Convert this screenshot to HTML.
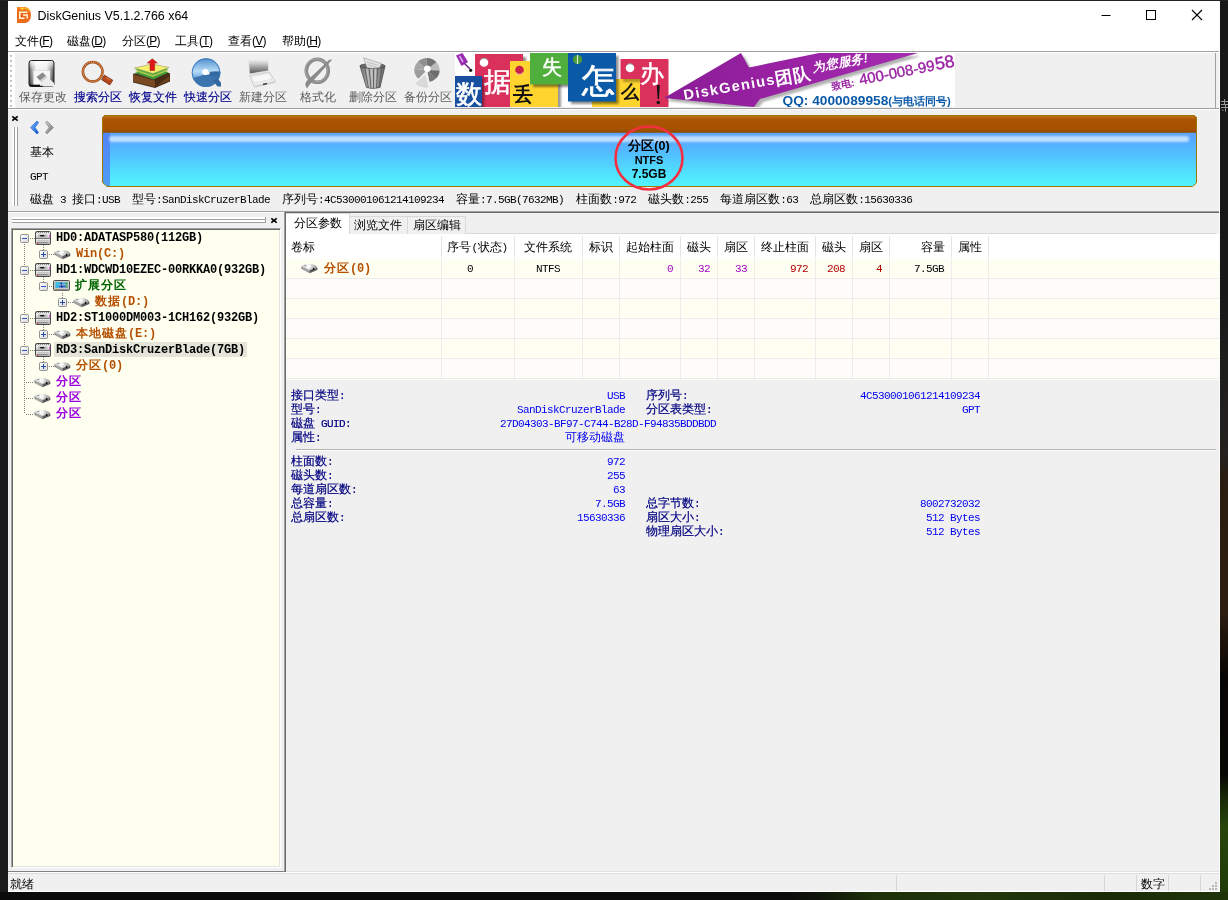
<!DOCTYPE html>
<html><head><meta charset="utf-8"><title>DiskGenius</title>
<style>
*{box-sizing:border-box;margin:0;padding:0}
html,body{width:1228px;height:900px;overflow:hidden;background:#191919}
body{position:relative;font-family:"Liberation Sans",sans-serif;font-size:12px;color:#000}
#root{position:absolute;left:0;top:0;width:1228px;height:900px;will-change:transform}
.a{position:absolute}
svg{overflow:visible}
.t{position:absolute;white-space:nowrap;line-height:14px;height:14px}
.m{font-family:"Liberation Mono",monospace;font-size:11px;letter-spacing:-0.6px}
.tr{font-weight:bold;letter-spacing:1px}
.mb{font-family:"Liberation Mono",monospace;font-size:12px;letter-spacing:-0.2px;font-weight:bold}
.mi u{text-decoration:underline;text-underline-offset:1px}
.tl{width:55px;text-align:center;color:#5c5c5c}
.tl.b{color:#00008b;-webkit-text-stroke:.15px #00008b}
.br{color:#b45000}.gr{color:#006400}.pu{color:#9a00e0}
.lab{color:#000080;-webkit-text-stroke:.2px #000080}
.val{color:#0000f0;text-align:right}
.r{text-align:right}.c{text-align:center}
</style></head><body>
<div id="root">
<div class="a" style="left:0px;top:0px;width:8px;height:900px;background:#1b1b1b;"></div>
<div class="a" style="left:1220px;top:0px;width:8px;height:900px;background:linear-gradient(#171717 0,#181818 33%,#1e1e1d 40%,#24211e 51%,#2a1c10 53%,#2c1d10 68%,#1a1008 72%,#080604 75%,#070704 86%,#1a2c08 89%,#27450b 92%,#1f3a08 100%);"></div>
<svg class="a" style="left:1221px;top:99px" width="7" height="13"><path d="M0 2.500h7M3.500 0v5M0 5.500h7M0 8.500h7M4.500 6v6.500M1 10.500l1.500 1.500" stroke="#9a9a9a" stroke-width="1" fill="none"/></svg>
<div class="a" style="left:0px;top:892px;width:1228px;height:8px;background:linear-gradient(90deg,#0b0b0b 0,#0c0c0c 64%,#10160a 67%,#1d3009 71%,#22370c 80%,#1a2c08 90%,#1f3409 100%);"></div>
<div class="a" style="left:0px;top:0px;width:1228px;height:1px;background:#222;"></div>
<div class="a" style="left:8px;top:1px;width:1212px;height:891px;background:#f0f0f0;"></div>
<div class="a" style="left:8px;top:1px;width:1212px;height:30px;background:#fff;"></div>
<svg class="a" style="left:16px;top:7px" width="16" height="16" viewBox="0 0 16 16"><defs><linearGradient id="tg" x1="0" y1="0" x2="0" y2="1"><stop offset="0" stop-color="#f5871f"/><stop offset=".3" stop-color="#f06c1c"/><stop offset="1" stop-color="#ee6a1c"/></linearGradient></defs><path d="M1 0H9.500Q15 1.500 15 8Q15 14.500 9.500 16H1z" fill="url(#tg)"/><path d="M4 1.200H9.500Q12.500 2 13.800 4.500" stroke="#fbb724" stroke-width="1.400" fill="none" opacity=".85"/><circle cx="6.300" cy="1.700" r="1" fill="#ffe838"/><path d="M11.400 5.300H3.800V11.300H8.600M11.200 11.600V8.100H7" fill="none" stroke="#fff6d8" stroke-width="1.500"/><path d="M5 7.500L7 10H5z" fill="#e8401c"/></svg>
<div class="t " style="left:37.5px;top:9px;font-size:12.45px;line-height:15px;height:15px">DiskGenius V5.1.2.766 x64</div>
<svg class="a" style="left:1096px;top:5px" width="116" height="22" viewBox="0 0 116 22"><path d="M5.5 10.500h9" stroke="#000" stroke-width="1" fill="none"/><rect x="50.500" y="5.500" width="9" height="9" fill="none" stroke="#000" stroke-width="1"/><path d="M96 5l10 10M106 5l-10 10" stroke="#000" stroke-width="1.100" fill="none"/></svg>
<div class="a" style="left:8px;top:31px;width:1212px;height:20px;background:#fff;"></div>
<div class="t mi" style="left:15px;top:34px;">文件<span style="letter-spacing:-.7px">(<u>F</u>)</span></div>
<div class="t mi" style="left:67px;top:34px;">磁盘<span style="letter-spacing:-.7px">(<u>D</u>)</span></div>
<div class="t mi" style="left:122px;top:34px;">分区<span style="letter-spacing:-.7px">(<u>P</u>)</span></div>
<div class="t mi" style="left:175px;top:34px;">工具<span style="letter-spacing:-.7px">(<u>T</u>)</span></div>
<div class="t mi" style="left:228px;top:34px;">查看<span style="letter-spacing:-.7px">(<u>V</u>)</span></div>
<div class="t mi" style="left:282px;top:34px;">帮助<span style="letter-spacing:-.7px">(<u>H</u>)</span></div>
<div class="a" style="left:8px;top:51px;width:1212px;height:1px;background:#a0a0a0;"></div>
<div class="a" style="left:8px;top:52px;width:1212px;height:1px;background:#fff;"></div>
<div class="a" style="left:8px;top:108px;width:1212px;height:1px;background:#a0a0a0;"></div>
<div class="a" style="left:8px;top:109px;width:1212px;height:1px;background:#fff;"></div>
<div class="a" style="left:1215px;top:53px;width:1px;height:55px;background:#a0a0a0;"></div>
<div class="a" style="left:8px;top:53px;width:7px;height:55px;background:#fff;"></div>
<div class="a" style="left:10px;top:55px;width:2px;height:52px;background:repeating-linear-gradient(#b4b4b4 0,#d4d4d4 2px,transparent 2px,transparent 5px);"></div>
<svg class="a" style="left:0;top:0" width="470" height="110" viewBox="0 0 470 110">
<defs>
<linearGradient id="i1a" x1="0" y1="0" x2="1" y2="0"><stop offset="0" stop-color="#2a2a2a"/><stop offset=".12" stop-color="#9a9a9a"/><stop offset=".3" stop-color="#f2f2f2"/><stop offset=".7" stop-color="#e6e6e6"/><stop offset=".88" stop-color="#8a8a8a"/><stop offset="1" stop-color="#2a2a2a"/></linearGradient>
<linearGradient id="i1b" x1="0" y1="0" x2="0" y2="1"><stop offset="0" stop-color="#fff" stop-opacity=".9"/><stop offset=".35" stop-color="#fff" stop-opacity=".2"/><stop offset="1" stop-color="#000" stop-opacity=".35"/></linearGradient>
<linearGradient id="i4a" x1="0" y1="0" x2="0" y2="1"><stop offset="0" stop-color="#4f8fd0"/><stop offset=".45" stop-color="#b8dcf6"/><stop offset=".7" stop-color="#6aa8dc"/></linearGradient>
<linearGradient id="i5a" x1="0" y1="0" x2="0" y2="1"><stop offset="0" stop-color="#fdfdfd"/><stop offset=".35" stop-color="#c8c8c8"/><stop offset="1" stop-color="#505050"/></linearGradient>
<linearGradient id="i7a" x1="0" y1="0" x2="1" y2="0"><stop offset="0" stop-color="#6e6e6e"/><stop offset=".3" stop-color="#a8a8a8"/><stop offset=".55" stop-color="#b4b4b4"/><stop offset="1" stop-color="#5e5e5e"/></linearGradient>
<clipPath id="c4"><circle cx="206" cy="72.600" r="14.300"/></clipPath>
</defs>
<!-- 1 save -->
<path d="M31.500 60.500H51.500Q54 60.500 54 63V84Q54 86.500 51.500 86.500H31.500Q29 86.500 29 84V63Q29 60.500 31.500 60.500z" fill="url(#i1a)"/>
<path d="M31.500 60.500H51.500Q54 60.500 54 63V84Q54 86.500 51.500 86.500H31.500Q29 86.500 29 84V63Q29 60.500 31.500 60.500z" fill="url(#i1b)" stroke="#1e1e1e" stroke-width="1"/>
<rect x="33.500" y="70.500" width="16.500" height="14.500" fill="#f6f6f6" stroke="#d0d0d0" stroke-width=".5"/>
<path d="M29.500 85.500H40" stroke="#111" stroke-width="1.600"/>
<path d="M36.500 77L42.500 72.500L54 83V86.500H43z" fill="#ededed"/>
<path d="M36.500 77L42.500 72.500L46 75.700L40 80.500z" fill="#8a8a8a"/>
<path d="M40 80.500L46 75.700L47.500 77L41.300 82z" fill="#c9c9c9"/>
<!-- 2 search -->
<circle cx="92.700" cy="71.700" r="9.800" fill="none" stroke="#8a4418" stroke-width="2.500"/>
<circle cx="92.700" cy="71.700" r="9.800" fill="none" stroke="#e8924c" stroke-width="1.500" stroke-dasharray="1.300 .9"/>
<circle cx="92.700" cy="71.700" r="9.800" fill="none" stroke="#d87838" stroke-width="1" opacity=".7"/>
<path d="M104.300 75L112.800 80.200L109.800 85L101.600 79.700z" fill="#b4461c" stroke="#6a2a10" stroke-width=".7"/>
<path d="M106.300 77.500L110 79.800" stroke="#e07a48" stroke-width="1.400" opacity=".7"/>
<!-- 3 recover -->
<path d="M133 74L155 80V87.500L133 82z" fill="#7b4a22"/>
<path d="M155 80L170 73.500V81L155 87.500z" fill="#4a2c14"/>
<path d="M155 87L169.500 76V81L155 87.500z" fill="#6a4220"/>
<path d="M133 74L155 80L170 73.500" fill="none" stroke="#3a2410" stroke-width=".8"/>
<path d="M133 82L155 87.500L170 81" fill="none" stroke="#2a1808" stroke-width=".8"/>
<path d="M133 74L151 69L170 73.500L155 80.500z" fill="#4a2c14"/><path d="M134.500 73L152 68L169 72.300L153.500 79.600z" fill="#3c9a3c"/>
<path d="M135 71L152 66.500L168.500 70.500L153 77z" fill="#b8c848"/>
<path d="M135 69.500L152 65.500L168.500 69L153 75.500z" fill="#58b048"/>
<path d="M134.500 68L152 64L169 67.500L153 73.500z" fill="#f4f070" stroke="#8a8a40" stroke-width=".5"/>
<path d="M150 70.500V63H147.200L152.300 58.800L157.400 63H154.600V70.500z" fill="#e01818" stroke="#a01010" stroke-width=".5"/>
<!-- 4 quick partition -->
<circle cx="206" cy="72.600" r="14.300" fill="url(#i4a)"/>
<g clip-path="url(#c4)"><path d="M190 78Q200 77 206 73.500T222 72V90H190z" fill="#3c73ad"/><path d="M206 73L222 71.500V76L208 76z" fill="#3468a0"/></g>
<circle cx="206" cy="72.600" r="13.800" fill="none" stroke="#3a78b8" stroke-width="1"/>
<path d="M213 81L217 78L221 82.500V86.500H217.500z" fill="#3468a0"/>
<circle cx="205.300" cy="72" r="3.100" fill="#fff"/>
<path d="M205.300 72H209.500V74.500H206z" fill="#fff"/>
<!-- 5 new partition (laptop) -->
<path d="M248.500 60.500L268.500 58.300L268.500 70.800L249.500 74z" fill="url(#i5a)" stroke="#e8e8e8" stroke-width=".8"/>
<path d="M249.500 75.500L269.500 72L275.500 81.500L254 86.500z" fill="#ececec" stroke="#c0c0c0" stroke-width=".7"/>
<path d="M251.500 76.800L268.800 73.600L272 79L254.300 82.800z" fill="#f8f8f8" stroke="#d8d8d8" stroke-width=".5"/>
<path d="M254 86.500L275.500 81.500V82.800L254.500 87.800z" fill="#d0d0d0"/>
<path d="M263 83.800L267 83V84.200L263 85z" fill="#1a1a1a"/>
<!-- 6 format -->
<ellipse cx="317.300" cy="70.800" rx="11" ry="11.500" fill="none" stroke="#8c8c8c" stroke-width="3.600"/>
<ellipse cx="316.300" cy="70.300" rx="11" ry="11.500" fill="none" stroke="#a6a6a6" stroke-width="1.200" opacity=".8"/>
<path d="M332.300 59.600L329.300 59.800L306.200 81.500L305.200 84.500L306.800 88.600L310 84.200z" fill="#8a8a8a"/>
<!-- 7 delete -->
<path d="M360 66L385 66L380 87.500Q373 89.500 366.500 87.500z" fill="url(#i7a)" stroke="#4e4e4e" stroke-width=".8"/>
<path d="M364.500 67L368.500 88M369 67L371 88.500M373.500 67L373.500 88.500M378 67L376.500 88M382 67L379 87.500" stroke="#5a5a5a" stroke-width=".9" fill="none"/>
<path d="M366.700 67L369.700 88M371.300 67L372.300 88.500M375.700 67L375 88.500" stroke="#d0d0d0" stroke-width=".9" fill="none" opacity=".8"/>
<ellipse cx="372.500" cy="66" rx="12.600" ry="2.400" fill="#6c6c6c" stroke="#444" stroke-width=".7"/>
<path d="M363.500 57.800L381.500 63.500L379.500 67.500Q372 69 367 67.500z" fill="#e4e4e4" stroke="#9a9a9a" stroke-width=".6"/>
<path d="M367 62L378.500 65.500M367.500 64.500L376 67" stroke="#b0b0b0" stroke-width=".7"/>
<!-- 8 backup -->
<g>
<path d="M426.900 69.900L426.900 58A12.500 11.900 0 0 1 436.500 62.300z" fill="#747474"/>
<path d="M426.900 69.900L436.500 62.300A12.500 11.900 0 0 1 439.600 70.500z" fill="#bdbdbd"/>
<path d="M426.900 69.900L439.600 70.500A12.500 11.900 0 0 1 436 78.500z" fill="#6e6e6e"/>
<path d="M426.900 69.900L436 78.500A12.500 11.900 0 0 1 429.500 81.800z" fill="#787878"/>
<path d="M426.900 69.900L426.900 58A12.500 11.900 0 0 0 418 61.500z" fill="#8e8e8e"/>
<path d="M426.900 69.900L418 61.500A12.500 11.900 0 0 0 414.300 69z" fill="#a6a6a6"/>
<path d="M426.900 69.900L414.300 69A12.500 11.900 0 0 0 418.500 78.800z" fill="#9c9c9c"/>
<path d="M425.500 75L416 83.500Q421 87.500 427.500 87.200z" fill="#dadada" stroke="#c4c4c4" stroke-width=".5"/>
<path d="M427.500 72L429 81.500L425 75.500z" fill="#f0f0f0"/>
<circle cx="427.300" cy="68.800" r="3.300" fill="#fff"/>
</g>
</svg>

<div class="t tl" style="left:15px;top:90px;">保存更改</div>
<div class="t tl b" style="left:70px;top:90px;">搜索分区</div>
<div class="t tl b" style="left:125px;top:90px;">恢复文件</div>
<div class="t tl b" style="left:180px;top:90px;">快速分区</div>
<div class="t tl" style="left:235px;top:90px;">新建分区</div>
<div class="t tl" style="left:290px;top:90px;">格式化</div>
<div class="t tl" style="left:345px;top:90px;">删除分区</div>
<div class="t tl" style="left:400px;top:90px;">备份分区</div>
<div class="a" id="banner" style="left:455px;top:53px;width:500px;height:54px;background:#fff;overflow:hidden"><svg width="500" height="54" viewBox="455 53 500 54" style="position:absolute;left:0;top:0;font-family:'Liberation Serif',serif">
<defs>
<filter id="sh" x="-20%" y="-20%" width="150%" height="150%"><feGaussianBlur stdDeviation="1.1"/></filter>
<linearGradient id="pa" x1="0" y1="0" x2="1" y2="0"><stop offset="0" stop-color="#8a1d96"/><stop offset=".5" stop-color="#9a22a4"/><stop offset="1" stop-color="#a42cae"/></linearGradient>
</defs>
<!-- red 据 -->
<rect x="478" y="57" width="48" height="52" fill="#000" opacity=".45" filter="url(#sh)"/>
<rect x="475" y="54" width="48" height="54" fill="#d9305c"/>
<circle cx="484" cy="62.500" r="4.300" fill="#fff"/><path d="M480.500 60A4.300 4.300 0 0 1 487.500 60" stroke="#999" stroke-width="1" fill="none"/>
<text x="484" y="91" font-size="27" fill="#fff" stroke="#fff" stroke-width=".6">据</text>
<!-- blue 数 -->
<rect x="457" y="78" width="27" height="30" fill="#000" opacity=".4" filter="url(#sh)"/>
<rect x="455" y="76" width="27" height="31" fill="#184f9e"/>
<text x="455.500" y="103" font-size="26" fill="#fff" stroke="#fff" stroke-width=".6">数</text>
<!-- pin -->
<path d="M456 55.500L462.500 53L468 62L461.500 66z" fill="#9a2ab0"/><path d="M459.500 56l3.500 6" stroke="#dcaaf0" stroke-width="1.600"/><path d="M464.500 63.500L470 69" stroke="#6a1a80" stroke-width="1.400"/><circle cx="470.700" cy="70.300" r="1.600" fill="#111"/>
<!-- yellow 丢 -->
<rect x="513" y="64" width="48" height="45" fill="#000" opacity=".4" filter="url(#sh)"/>
<rect x="510" y="61" width="48" height="47" fill="#ffd42e"/>
<circle cx="519.500" cy="70" r="4.300" fill="#c8204c"/><path d="M516 72.500A4.300 4.300 0 0 0 523 72.500" stroke="#f6b0c0" stroke-width="1" fill="none"/>
<text x="513" y="101" font-size="20" fill="#111" font-weight="bold">丢</text>
<!-- green 失 -->
<rect x="533" y="56" width="38" height="31" fill="#000" opacity=".45" filter="url(#sh)"/>
<rect x="530" y="53" width="38.500" height="31.500" fill="#4fae3c"/>
<text x="541.500" y="73.500" font-size="19.500" fill="#fff" stroke="#fff" stroke-width=".5">失</text>
<!-- yellow 么 -->
<rect x="595" y="82" width="47" height="27" fill="#000" opacity=".4" filter="url(#sh)"/>
<rect x="592" y="79" width="48" height="29" fill="#ffd42e"/>
<text x="620.500" y="97.500" font-size="18" fill="#111" font-weight="bold">么</text>
<!-- blue 怎 -->
<rect x="571" y="56" width="47.500" height="48" fill="#000" opacity=".45" filter="url(#sh)"/>
<rect x="568" y="53" width="48" height="48.500" fill="#0b5aa8"/>
<circle cx="577.500" cy="59.500" r="4.600" fill="#4a9a38"/><path d="M577.500 55V64" stroke="#d8f0d0" stroke-width="1.200"/>
<text x="581.500" y="91.500" font-size="33" fill="#fff" stroke="#fff" stroke-width=".8">怎</text>
<!-- red 办 -->
<path d="M640 59H668V107H640z" fill="#d9305c"/>
<rect x="623" y="62" width="20" height="20" fill="#000" opacity=".3" filter="url(#sh)"/>
<rect x="620.500" y="59" width="48" height="20" fill="#d9305c"/>
<rect x="640" y="79" width="28.500" height="28" fill="#d9305c"/>
<circle cx="630" cy="68" r="4.300" fill="#fff"/><path d="M626.500 65.500A4.300 4.300 0 0 1 633.500 65.500" stroke="#999" stroke-width="1" fill="none"/>
<text x="640" y="81.500" font-size="24" fill="#fff" stroke="#fff" stroke-width=".5">办</text>
<path d="M656.800 85L659.800 85L658.900 99L657.700 99z" fill="#111"/><circle cx="658.300" cy="102.500" r="1.700" fill="#111"/>
<!-- arrow -->
<path d="M667 101L744 56L752 70L822 56H921L763 102L757 110z" fill="#000" opacity=".3" filter="url(#sh)"/>
<path d="M664 98L741 53L749 67.500L819 53H918L760 99L754 107z" fill="url(#pa)"/>
<g transform="translate(684.500 100) rotate(-10)" fill="#fff" font-family="'Liberation Sans',sans-serif" font-weight="bold">
<text x="0" y="0" font-size="14.500" letter-spacing="1.350">DiskGenius</text>
<text x="93" y="1" font-size="17.500">团队</text>
<text x="131.500" y="-5.500" font-size="12.500" font-style="italic">为您服务!</text>
</g>
<g transform="translate(832.200 90.300) rotate(-11)" fill="#9a22a4" font-family="'Liberation Sans',sans-serif" font-weight="bold">
<text x="0" y="0" font-size="10">致电:</text>
<text x="28.500" y="0" font-size="15" font-weight="normal" stroke="#9a22a4" stroke-width=".4">400-008-99</text>
<text x="106" y="0" font-size="17.500" font-weight="normal" stroke="#9a22a4" stroke-width=".4">58</text>
</g>
<text x="782.500" y="105" font-size="13.700" fill="#0b5aa8" font-family="'Liberation Sans',sans-serif" font-weight="bold">QQ: 4000089958<tspan font-size="11.200" dy="-.5">(与电话同号)</tspan></text>
</svg>
</div>
<div class="a" id="disk" style="left:102px;top:115px;width:1095px;height:72px">
<svg width="1095" height="72" viewBox="0 0 1095 72" style="position:absolute;left:0;top:0">
<defs>
<linearGradient id="gb" x1="0" y1="0" x2="0" y2="1"><stop offset="0" stop-color="#5a7cf5"/><stop offset=".06" stop-color="#6a98fb"/><stop offset=".3" stop-color="#57a4ff"/><stop offset=".55" stop-color="#52c0ff"/><stop offset=".8" stop-color="#50e0fe"/><stop offset="1" stop-color="#52f4fd"/></linearGradient>
<linearGradient id="gbr" x1="0" y1="0" x2="0" y2="1"><stop offset="0" stop-color="#c27722"/><stop offset=".25" stop-color="#a95503"/><stop offset=".8" stop-color="#a65200"/><stop offset="1" stop-color="#8f4a00"/></linearGradient>
<filter id="bl" x="-5%" y="-100%" width="110%" height="300%"><feGaussianBlur stdDeviation="1.2"/></filter>
</defs>
<path d="M2.5 .5H1092.500L1094.500 2.500V68L1090.500 71.500H5L.5 67.500V2.500z" fill="url(#gb)"/>
<path d="M2.5 .5H1092.500L1094.500 2.500V17.500H.5V2.500z" fill="url(#gbr)"/>
<path d="M1 17.500H8V71H5L1 67.500z" fill="#4f78f0" opacity=".7"/>
<rect x="7" y="21" width="1080" height="6" rx="3" fill="#fff" opacity=".62" filter="url(#bl)"/>
<path d="M2.5 .5H1092.500L1094.500 2.500V68L1090.500 71.500H5L.5 67.500V2.500z" fill="none" stroke="#a07800" stroke-width="1"/>
<path d="M.5 17.500H1094.500" stroke="#8a5a10" stroke-width="1" opacity=".7"/>
<ellipse cx="547" cy="43" rx="33.500" ry="31.500" fill="none" stroke="#f43040" stroke-width="2.600"/>
</svg>
<div class="t" style="left:497px;top:24px;width:100px;text-align:center;font-weight:bold;font-size:12.500px">分区(0)</div>
<div class="t" style="left:497px;top:38px;width:100px;text-align:center;font-weight:bold;font-size:11px">NTFS</div>
<div class="t" style="left:497px;top:52px;width:100px;text-align:center;font-weight:bold;font-size:12px">7.5GB</div>
</div>

<svg class="a" style="left:11px;top:115px" width="8" height="7"><path d="M1.300 1.300L6.700 5.700M6.700 1.300L1.300 5.700" stroke="#000" stroke-width="1.700"/></svg>
<div class="a" style="left:12px;top:127px;width:3px;height:79px;background:#fff;border-right:1px solid #a0a0a0"></div>
<div class="a" style="left:15px;top:127px;width:3px;height:79px;background:#fff;border-right:1px solid #a0a0a0"></div>
<svg class="a" style="left:29px;top:120px" width="26" height="15" viewBox="0 0 26 15"><defs><linearGradient id="ab" x1="0" y1="0" x2="1" y2="1"><stop offset="0" stop-color="#7fc0ff"/><stop offset="1" stop-color="#0a4fd0"/></linearGradient><linearGradient id="ag" x1="0" y1="0" x2="1" y2="1"><stop offset="0" stop-color="#d0d0d0"/><stop offset="1" stop-color="#707070"/></linearGradient></defs>
<path d="M8 1L1.500 7.500L8 14L9.500 12.500L6 7.500L9.500 2.500z" fill="url(#ab)" stroke="#1a5ad0" stroke-width=".6"/>
<path d="M18 1L24.500 7.500L18 14L16.500 12.500L20 7.500L16.500 2.500z" fill="url(#ag)" stroke="#808080" stroke-width=".6"/></svg>
<div class="t " style="left:30px;top:145px;">基本</div>
<div class="t " style="left:30px;top:169px;"><span class="m">GPT</span></div>
<div class="t " style="left:30px;top:192px;">磁盘<span class="m">&nbsp;3&nbsp;</span>接口<span class="m">:USB&nbsp;&nbsp;</span>型号<span class="m">:SanDiskCruzerBlade&nbsp;&nbsp;</span>序列号<span class="m">:4C530001061214109234&nbsp;&nbsp;</span>容量<span class="m">:7.5GB(7632MB)&nbsp;&nbsp;</span>柱面数<span class="m">:972&nbsp;&nbsp;</span>磁头数<span class="m">:255&nbsp;&nbsp;</span>每道扇区数<span class="m">:63&nbsp;&nbsp;</span>总扇区数<span class="m">:15630336</span></div>
<div class="a" style="left:8px;top:211px;width:1212px;height:1px;background:#a0a0a0;"></div>
<div class="a" style="left:8px;top:212px;width:1212px;height:1px;background:#fff;"></div>
<div class="a" style="left:12px;top:217px;width:254px;height:3px;background:#fff;border-bottom:1px solid #a0a0a0"></div>
<div class="a" style="left:12px;top:220px;width:254px;height:3px;background:#fff;border-bottom:1px solid #a0a0a0"></div>
<div class="a" style="left:265px;top:217px;width:1px;height:6px;background:#a0a0a0;"></div>
<svg class="a" style="left:270px;top:217px" width="8" height="7"><path d="M1.300 1.300L6.700 5.700M6.700 1.300L1.300 5.700" stroke="#000" stroke-width="1.700"/></svg>
<div class="a" style="left:11px;top:228px;width:270px;height:640px;background:#fffff0;border:1px solid #a0a0a0;border-right-color:#fff;border-bottom-color:#fff;box-shadow:inset 1px 1px 0 #696969,inset -1px -1px 0 #e3e3e3"></div>
<svg width="0" height="0" style="position:absolute"><defs>
<linearGradient id="bx" x1="0" y1="0" x2="1" y2="1"><stop offset="0" stop-color="#fff"/><stop offset="1" stop-color="#d8d8d8"/></linearGradient>
<linearGradient id="hd" x1="0" y1="0" x2="0" y2="1"><stop offset="0" stop-color="#d8d8d8"/><stop offset=".35" stop-color="#f4f4f4"/><stop offset=".5" stop-color="#b0b0b0"/><stop offset=".62" stop-color="#eaeaea"/><stop offset="1" stop-color="#a8a8a8"/></linearGradient>
<linearGradient id="pt" x1="0" y1="0" x2="1" y2="0"><stop offset="0" stop-color="#c4c4c4"/><stop offset=".45" stop-color="#f4f4f4"/><stop offset=".8" stop-color="#b8b8b8"/><stop offset="1" stop-color="#8a8a8a"/></linearGradient>
<g id="bm"><rect x=".5" y=".5" width="8" height="8" rx="1" fill="url(#bx)" stroke="#919191"/><path d="M2 4.500h5" stroke="#2d55c8" stroke-width="1"/></g>
<g id="bp"><rect x=".5" y=".5" width="8" height="8" rx="1" fill="url(#bx)" stroke="#919191"/><path d="M2 4.500h5M4.500 2v5" stroke="#2048a8" stroke-width="1"/></g>
<g id="ihd"><rect x=".5" y=".5" width="15" height="13" rx="1" fill="url(#hd)" stroke="#4a4a4a"/><path d="M1 1.500h14" stroke="#8a8a8a" stroke-width="1" stroke-dasharray="1 1"/><rect x="2.500" y="3.500" width="10" height="2.500" rx="1" fill="#b8b8b8"/><rect x="5" y="4" width="4.500" height="1.600" rx=".8" fill="#1a1a1a"/><path d="M1 7.500h14" stroke="#7a7a7a"/><path d="M2.500 9.500h11" stroke="#c4c4c4"/><path d="M2.500 11.500h10" stroke="#8c8c8c"/><rect x="14" y="4" width="1.500" height="2" fill="#d040d0"/><rect x="2" y="11.500" width="1.200" height="1.500" fill="#e04040"/></g>
<g id="ipt"><path d="M.3 2L4 .3H11.500L14.500 1.600L16.300 3.600L8.500 6.300L.3 2.600z" fill="url(#pt)"/><path d="M.3 2.400L8.500 6.100V9.200L.3 4.800z" fill="#909090"/><path d="M2 4.300L7 7.300M4 4.100L8 6.800" stroke="#c0c0c0" stroke-width=".6"/><path d="M8.500 6.100L16.300 3.400V6L8.500 9.200z" fill="#585858"/><ellipse cx="12.700" cy="4.900" rx=".9" ry="1.100" fill="#121212"/><circle cx="14.300" cy="4.700" r=".75" fill="#a4a4a4"/><ellipse cx="4.300" cy="1.600" rx="1.100" ry=".5" fill="#8c8c8c"/><ellipse cx="7.800" cy="2.300" rx="2.300" ry="1.100" fill="#fff" opacity=".9"/></g>
<g id="iex"><rect x=".5" y=".5" width="16" height="10" rx="1" fill="#c9c9c9" stroke="#4e4e4e"/><rect x="1.500" y="9" width="14" height="1.500" fill="#8c8c8c"/><rect x="2.500" y="2.500" width="12" height="2" fill="#3aa0e8"/><rect x="2.500" y="2.500" width="4" height="2" fill="#20c8e8"/><rect x="12.500" y="2.500" width="2" height="2" fill="#40b040"/><rect x="7.500" y="2.500" width="1.500" height="2" fill="#1a3c90"/><rect x="2.500" y="5.500" width="12" height="2" fill="#2a60d8"/><rect x="2.500" y="5.500" width="3.500" height="2" fill="#20c8e8"/><rect x="12.500" y="5.500" width="2" height="2" fill="#50b848"/><rect x="8" y="5.500" width="1.500" height="2" fill="#18307a"/><rect x="2.500" y="8" width="1.500" height="1" fill="#e0c040"/></g>
</defs></svg>
<div class="a" style="left:24px;top:244px;width:1px;height:170px;background:repeating-linear-gradient(#808080 0,#808080 1px,transparent 1px,transparent 2px)"></div>
<div class="a" style="left:30px;top:238px;width:5px;height:1px;background:repeating-linear-gradient(90deg,#808080 0,#808080 1px,transparent 1px,transparent 2px)"></div>
<svg class="a" style="left:35px;top:231px" width="16" height="14"><use href="#ihd"/></svg>
<svg class="a" style="left:20px;top:234px" width="9" height="9"><use href="#bm"/></svg>
<div class="t tr " style="left:56px;top:230px;"><span class="mb">HD0:ADATASP580(112GB)</span></div>
<div class="a" style="left:49px;top:254px;width:5px;height:1px;background:repeating-linear-gradient(90deg,#808080 0,#808080 1px,transparent 1px,transparent 2px)"></div>
<div class="a" style="left:43px;top:245px;width:1px;height:5px;background:repeating-linear-gradient(#808080 0,#808080 1px,transparent 1px,transparent 2px)"></div>
<svg class="a" style="left:53.7px;top:249.7px" width="17" height="10"><use href="#ipt"/></svg>
<svg class="a" style="left:39px;top:250px" width="9" height="9"><use href="#bp"/></svg>
<div class="t tr br" style="left:76px;top:246px;"><span class="mb">Win(C:)</span></div>
<div class="a" style="left:30px;top:270px;width:5px;height:1px;background:repeating-linear-gradient(90deg,#808080 0,#808080 1px,transparent 1px,transparent 2px)"></div>
<svg class="a" style="left:35px;top:263px" width="16" height="14"><use href="#ihd"/></svg>
<svg class="a" style="left:20px;top:266px" width="9" height="9"><use href="#bm"/></svg>
<div class="t tr " style="left:56px;top:262px;"><span class="mb">HD1:WDCWD10EZEC-00RKKA0(932GB)</span></div>
<div class="a" style="left:49px;top:286px;width:5px;height:1px;background:repeating-linear-gradient(90deg,#808080 0,#808080 1px,transparent 1px,transparent 2px)"></div>
<div class="a" style="left:43px;top:277px;width:1px;height:5px;background:repeating-linear-gradient(#808080 0,#808080 1px,transparent 1px,transparent 2px)"></div>
<svg class="a" style="left:53px;top:280px" width="17" height="11"><use href="#iex"/></svg>
<svg class="a" style="left:39px;top:282px" width="9" height="9"><use href="#bm"/></svg>
<div class="t tr gr" style="left:75px;top:278px;">扩展分区</div>
<div class="a" style="left:68px;top:302px;width:5px;height:1px;background:repeating-linear-gradient(90deg,#808080 0,#808080 1px,transparent 1px,transparent 2px)"></div>
<div class="a" style="left:62px;top:293px;width:1px;height:5px;background:repeating-linear-gradient(#808080 0,#808080 1px,transparent 1px,transparent 2px)"></div>
<svg class="a" style="left:72.7px;top:297.7px" width="17" height="10"><use href="#ipt"/></svg>
<svg class="a" style="left:58px;top:298px" width="9" height="9"><use href="#bp"/></svg>
<div class="t tr br" style="left:95px;top:294px;">数据<span class="mb">(D:)</span></div>
<div class="a" style="left:30px;top:318px;width:5px;height:1px;background:repeating-linear-gradient(90deg,#808080 0,#808080 1px,transparent 1px,transparent 2px)"></div>
<svg class="a" style="left:35px;top:311px" width="16" height="14"><use href="#ihd"/></svg>
<svg class="a" style="left:20px;top:314px" width="9" height="9"><use href="#bm"/></svg>
<div class="t tr " style="left:56px;top:310px;"><span class="mb">HD2:ST1000DM003-1CH162(932GB)</span></div>
<div class="a" style="left:49px;top:334px;width:5px;height:1px;background:repeating-linear-gradient(90deg,#808080 0,#808080 1px,transparent 1px,transparent 2px)"></div>
<div class="a" style="left:43px;top:325px;width:1px;height:5px;background:repeating-linear-gradient(#808080 0,#808080 1px,transparent 1px,transparent 2px)"></div>
<svg class="a" style="left:53.7px;top:329.7px" width="17" height="10"><use href="#ipt"/></svg>
<svg class="a" style="left:39px;top:330px" width="9" height="9"><use href="#bp"/></svg>
<div class="t tr br" style="left:76px;top:326px;">本地磁盘<span class="mb">(E:)</span></div>
<div class="a" style="left:30px;top:350px;width:5px;height:1px;background:repeating-linear-gradient(90deg,#808080 0,#808080 1px,transparent 1px,transparent 2px)"></div>
<svg class="a" style="left:35px;top:343px" width="16" height="14"><use href="#ihd"/></svg>
<svg class="a" style="left:20px;top:346px" width="9" height="9"><use href="#bm"/></svg>
<div class="a" style="left:54px;top:342px;width:193px;height:15px;background:#e4e4d9;"></div>
<div class="t tr " style="left:56px;top:342px;"><span class="mb">RD3:SanDiskCruzerBlade(7GB)</span></div>
<div class="a" style="left:49px;top:366px;width:5px;height:1px;background:repeating-linear-gradient(90deg,#808080 0,#808080 1px,transparent 1px,transparent 2px)"></div>
<div class="a" style="left:43px;top:357px;width:1px;height:5px;background:repeating-linear-gradient(#808080 0,#808080 1px,transparent 1px,transparent 2px)"></div>
<svg class="a" style="left:53.7px;top:361.7px" width="17" height="10"><use href="#ipt"/></svg>
<svg class="a" style="left:39px;top:362px" width="9" height="9"><use href="#bp"/></svg>
<div class="t tr br" style="left:76px;top:358px;">分区<span class="mb">(0)</span></div>
<div class="a" style="left:26px;top:382px;width:8px;height:1px;background:repeating-linear-gradient(90deg,#808080 0,#808080 1px,transparent 1px,transparent 2px)"></div>
<svg class="a" style="left:33.7px;top:377.7px" width="17" height="10"><use href="#ipt"/></svg>
<div class="t tr pu" style="left:56px;top:374px;">分区</div>
<div class="a" style="left:26px;top:398px;width:8px;height:1px;background:repeating-linear-gradient(90deg,#808080 0,#808080 1px,transparent 1px,transparent 2px)"></div>
<svg class="a" style="left:33.7px;top:393.7px" width="17" height="10"><use href="#ipt"/></svg>
<div class="t tr pu" style="left:56px;top:390px;">分区</div>
<div class="a" style="left:26px;top:414px;width:8px;height:1px;background:repeating-linear-gradient(90deg,#808080 0,#808080 1px,transparent 1px,transparent 2px)"></div>
<svg class="a" style="left:33.7px;top:409.7px" width="17" height="10"><use href="#ipt"/></svg>
<div class="t tr pu" style="left:56px;top:406px;">分区</div>
<div class="a" style="left:284px;top:212px;width:1px;height:660px;background:#a0a0a0;"></div>
<div class="a" style="left:285px;top:212px;width:1px;height:660px;background:#696969;"></div>
<div class="a" style="left:285px;top:212px;width:934px;height:1px;background:#696969;"></div>
<div class="a" style="left:8px;top:871px;width:277px;height:1px;background:#828282;"></div>
<div class="a" style="left:8px;top:872px;width:1212px;height:1px;background:#fff;"></div>
<div class="a" style="left:8px;top:873px;width:1212px;height:1px;background:#dcdcdc;"></div>
<div class="a" style="left:286px;top:871px;width:933px;height:1px;background:#e3e3e3;"></div>
<div class="a" style="left:286px;top:213px;width:933px;height:21px;background:#f0f0f0;"></div>
<div class="a" style="left:286px;top:233px;width:930px;height:1px;background:#d9d9d9;"></div>
<div class="a" style="left:286px;top:213px;width:64px;height:22px;background:#fff;border:1px solid #d9d9d9;border-bottom:none;border-left:none"></div>
<div class="a" style="left:350px;top:216px;width:58px;height:18px;background:#f0f0f0;border:1px solid #d9d9d9;border-left:none;border-bottom:none"></div>
<div class="a" style="left:408px;top:216px;width:58px;height:18px;background:#f0f0f0;border:1px solid #d9d9d9;border-left:none;border-bottom:none"></div>
<div class="t " style="left:294px;top:216px;">分区参数</div>
<div class="t " style="left:354px;top:218px;">浏览文件</div>
<div class="t " style="left:413px;top:218px;">扇区编辑</div>
<div class="a" style="left:286px;top:234px;width:933px;height:25px;background:#fff;"></div>
<div class="a" style="left:286px;top:259px;width:933px;height:19px;background:#fffef3;"></div>
<div class="a" style="left:286px;top:278px;width:933px;height:1px;background:#ececec;"></div>
<div class="a" style="left:286px;top:279px;width:933px;height:19px;background:#fdfcf8;"></div>
<div class="a" style="left:286px;top:298px;width:933px;height:1px;background:#ececec;"></div>
<div class="a" style="left:286px;top:299px;width:933px;height:19px;background:#fffef3;"></div>
<div class="a" style="left:286px;top:318px;width:933px;height:1px;background:#ececec;"></div>
<div class="a" style="left:286px;top:319px;width:933px;height:19px;background:#fdfcf8;"></div>
<div class="a" style="left:286px;top:338px;width:933px;height:1px;background:#ececec;"></div>
<div class="a" style="left:286px;top:339px;width:933px;height:19px;background:#fffef3;"></div>
<div class="a" style="left:286px;top:358px;width:933px;height:1px;background:#ececec;"></div>
<div class="a" style="left:286px;top:359px;width:933px;height:19px;background:#fdfcf8;"></div>
<div class="a" style="left:286px;top:378px;width:933px;height:1px;background:#ececec;"></div>
<div class="a" style="left:286px;top:379px;width:933px;height:1px;background:#fffef3;"></div>
<div class="a" style="left:441px;top:236px;width:1px;height:22px;background:#e5e5e5;"></div>
<div class="a" style="left:441px;top:259px;width:1px;height:121px;background:#ececec;"></div>
<div class="a" style="left:514px;top:236px;width:1px;height:22px;background:#e5e5e5;"></div>
<div class="a" style="left:514px;top:259px;width:1px;height:121px;background:#ececec;"></div>
<div class="a" style="left:582px;top:236px;width:1px;height:22px;background:#e5e5e5;"></div>
<div class="a" style="left:582px;top:259px;width:1px;height:121px;background:#ececec;"></div>
<div class="a" style="left:619px;top:236px;width:1px;height:22px;background:#e5e5e5;"></div>
<div class="a" style="left:619px;top:259px;width:1px;height:121px;background:#ececec;"></div>
<div class="a" style="left:680px;top:236px;width:1px;height:22px;background:#e5e5e5;"></div>
<div class="a" style="left:680px;top:259px;width:1px;height:121px;background:#ececec;"></div>
<div class="a" style="left:717px;top:236px;width:1px;height:22px;background:#e5e5e5;"></div>
<div class="a" style="left:717px;top:259px;width:1px;height:121px;background:#ececec;"></div>
<div class="a" style="left:754px;top:236px;width:1px;height:22px;background:#e5e5e5;"></div>
<div class="a" style="left:754px;top:259px;width:1px;height:121px;background:#ececec;"></div>
<div class="a" style="left:815px;top:236px;width:1px;height:22px;background:#e5e5e5;"></div>
<div class="a" style="left:815px;top:259px;width:1px;height:121px;background:#ececec;"></div>
<div class="a" style="left:852px;top:236px;width:1px;height:22px;background:#e5e5e5;"></div>
<div class="a" style="left:852px;top:259px;width:1px;height:121px;background:#ececec;"></div>
<div class="a" style="left:889px;top:236px;width:1px;height:22px;background:#e5e5e5;"></div>
<div class="a" style="left:889px;top:259px;width:1px;height:121px;background:#ececec;"></div>
<div class="a" style="left:951px;top:236px;width:1px;height:22px;background:#e5e5e5;"></div>
<div class="a" style="left:951px;top:259px;width:1px;height:121px;background:#ececec;"></div>
<div class="a" style="left:988px;top:236px;width:1px;height:22px;background:#e5e5e5;"></div>
<div class="a" style="left:988px;top:259px;width:1px;height:121px;background:#ececec;"></div>
<div class="t " style="left:291px;top:240px;">卷标</div>
<div class="t c" style="left:441px;top:240px;width:73px">序号<span class="m">(</span>状态<span class="m">)</span></div>
<div class="t c" style="left:514px;top:240px;width:68px">文件系统</div>
<div class="t c" style="left:582px;top:240px;width:37px">标识</div>
<div class="t c" style="left:619px;top:240px;width:61px">起始柱面</div>
<div class="t c" style="left:680px;top:240px;width:37px">磁头</div>
<div class="t c" style="left:717px;top:240px;width:37px">扇区</div>
<div class="t c" style="left:754px;top:240px;width:61px">终止柱面</div>
<div class="t c" style="left:815px;top:240px;width:37px">磁头</div>
<div class="t c" style="left:852px;top:240px;width:37px">扇区</div>
<div class="t r" style="left:889px;top:240px;width:62px;padding-right:6px">容量</div>
<div class="t " style="left:958px;top:240px;">属性</div>
<svg class="a" style="left:301px;top:263.500px" width="17" height="10"><use href="#ipt"/></svg>
<div class="t tr br" style="left:324px;top:261px;">分区<span class="mb">(0)</span></div>
<div class="t c" style="left:441px;top:261px;width:73px;color:#000;padding-right:15px"><span class="m">0</span></div>
<div class="t c" style="left:514px;top:261px;width:68px;color:#000"><span class="m">NTFS</span></div>
<div class="t r" style="left:619px;top:261px;width:61px;padding-right:7px;color:#a000c0"><span class="m">0</span></div>
<div class="t r" style="left:680px;top:261px;width:37px;padding-right:7px;color:#a000c0"><span class="m">32</span></div>
<div class="t r" style="left:717px;top:261px;width:37px;padding-right:7px;color:#a000c0"><span class="m">33</span></div>
<div class="t r" style="left:754px;top:261px;width:61px;padding-right:7px;color:#b00000"><span class="m">972</span></div>
<div class="t r" style="left:815px;top:261px;width:37px;padding-right:7px;color:#b00000"><span class="m">208</span></div>
<div class="t r" style="left:852px;top:261px;width:37px;padding-right:7px;color:#b00000"><span class="m">4</span></div>
<div class="t r" style="left:889px;top:261px;width:62px;padding-right:7px;color:#000"><span class="m">7.5GB</span></div>
<div class="t lab" style="left:291px;top:388px;">接口类型<span class="m">:</span></div>
<div class="t val" style="left:325px;top:388px;width:300px"><span class="m">USB</span></div>
<div class="t lab" style="left:291px;top:402px;">型号<span class="m">:</span></div>
<div class="t val" style="left:325px;top:402px;width:300px"><span class="m">SanDiskCruzerBlade</span></div>
<div class="t lab" style="left:291px;top:416px;">磁盘<span class="m">&nbsp;GUID:</span></div>
<div class="t lab" style="left:291px;top:430px;">属性<span class="m">:</span></div>
<div class="t val" style="left:325px;top:430px;width:300px">可移动磁盘</div>
<div class="t " style="left:500px;top:416px;color:#0000f0"><span class="m">27D04303-BF97-C744-B28D-F94835BDDBDD</span></div>
<div class="t lab" style="left:646px;top:388px;">序列号<span class="m">:</span></div>
<div class="t val" style="left:680px;top:388px;width:300px"><span class="m">4C530001061214109234</span></div>
<div class="t lab" style="left:646px;top:402px;">分区表类型<span class="m">:</span></div>
<div class="t val" style="left:680px;top:402px;width:300px"><span class="m">GPT</span></div>
<div class="a" style="left:296px;top:449px;width:920px;height:1px;background:#b4b4b4;"></div>
<div class="a" style="left:296px;top:450px;width:920px;height:1px;background:#fff;"></div>
<div class="t lab" style="left:291px;top:454px;">柱面数<span class="m">:</span></div>
<div class="t val" style="left:325px;top:454px;width:300px"><span class="m">972</span></div>
<div class="t lab" style="left:291px;top:468px;">磁头数<span class="m">:</span></div>
<div class="t val" style="left:325px;top:468px;width:300px"><span class="m">255</span></div>
<div class="t lab" style="left:291px;top:482px;">每道扇区数<span class="m">:</span></div>
<div class="t val" style="left:325px;top:482px;width:300px"><span class="m">63</span></div>
<div class="t lab" style="left:291px;top:496px;">总容量<span class="m">:</span></div>
<div class="t val" style="left:325px;top:496px;width:300px"><span class="m">7.5GB</span></div>
<div class="t lab" style="left:291px;top:510px;">总扇区数<span class="m">:</span></div>
<div class="t val" style="left:325px;top:510px;width:300px"><span class="m">15630336</span></div>
<div class="t lab" style="left:646px;top:496px;">总字节数<span class="m">:</span></div>
<div class="t val" style="left:680px;top:496px;width:300px"><span class="m">8002732032</span></div>
<div class="t lab" style="left:646px;top:510px;">扇区大小<span class="m">:</span></div>
<div class="t val" style="left:680px;top:510px;width:300px"><span class="m">512&nbsp;Bytes</span></div>
<div class="t lab" style="left:646px;top:524px;">物理扇区大小<span class="m">:</span></div>
<div class="t val" style="left:680px;top:524px;width:300px"><span class="m">512&nbsp;Bytes</span></div>
<div class="a" style="left:8px;top:874px;width:1212px;height:17px;background:#f0f0f0;"></div>
<div class="a" style="left:8px;top:891px;width:1212px;height:1px;background:#fff;"></div>
<div class="t " style="left:10px;top:877px;">就绪</div>
<div class="a" style="left:896px;top:875px;width:1px;height:16px;background:#d7d7d7;"></div>
<div class="a" style="left:1104px;top:875px;width:1px;height:16px;background:#d7d7d7;"></div>
<div class="a" style="left:1136px;top:875px;width:1px;height:16px;background:#d7d7d7;"></div>
<div class="a" style="left:1168px;top:875px;width:1px;height:16px;background:#d7d7d7;"></div>
<div class="a" style="left:1200px;top:875px;width:1px;height:16px;background:#d7d7d7;"></div>
<div class="t " style="left:1141px;top:877px;">数字</div>
<svg class="a" style="left:1208px;top:881px" width="10" height="10"><g fill="#b8b8b8"><rect x="7" y="1" width="2" height="2"/><rect x="4" y="4" width="2" height="2"/><rect x="7" y="4" width="2" height="2"/><rect x="1" y="7" width="2" height="2"/><rect x="4" y="7" width="2" height="2"/><rect x="7" y="7" width="2" height="2"/></g></svg>
<div class="a" style="left:1219px;top:1px;width:1px;height:891px;background:#fafafa;"></div>
</div>
</body></html>
